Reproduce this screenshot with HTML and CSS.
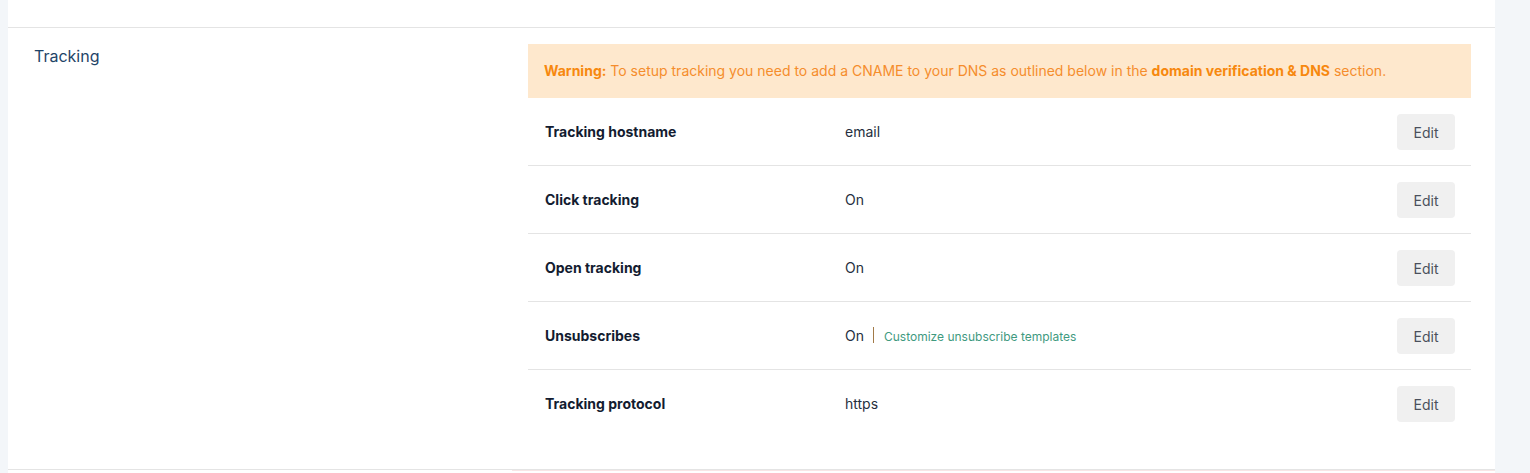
FILE: index.html
```html
<!DOCTYPE html>
<html>
<head>
<meta charset="utf-8">
<link rel="stylesheet" href="styles.css">
</head>
<body>
<div class="page">
  <div class="panel">
    <div class="prev"></div>
    <section class="section">
      <h2 class="section-title">Tracking</h2>
      <div class="section-body">
        <div class="warning"><strong>Warning:</strong> To setup tracking you need to add a CNAME to your DNS as outlined below in the <strong>domain verification &amp; DNS</strong> section.</div>
        <div class="row">
          <div class="label">Tracking hostname</div>
          <div class="value">email</div>
          <button class="edit">Edit</button>
        </div>
        <div class="row">
          <div class="label">Click tracking</div>
          <div class="value">On</div>
          <button class="edit">Edit</button>
        </div>
        <div class="row">
          <div class="label">Open tracking</div>
          <div class="value">On</div>
          <button class="edit">Edit</button>
        </div>
        <div class="row">
          <div class="label">Unsubscribes</div>
          <div class="value">On <span class="sep"></span><a class="link">Customize unsubscribe templates</a></div>
          <button class="edit">Edit</button>
        </div>
        <div class="row last">
          <div class="label">Tracking protocol</div>
          <div class="value">https</div>
          <button class="edit">Edit</button>
        </div>
      </div>
    </section>
    <div class="next"></div>
  </div>
</div>
</body>
</html>
```
FILE: styles.css
```css
html, body {
  margin: 0;
  padding: 0;
  background: #f3f6f9;
  font-family: Inter, "Noto Sans", Arial, sans-serif;
  height: 473px;
  overflow: hidden;
}
.page {
  padding-left: 8px;
  width: 1487px;
}
.panel {
  background: #ffffff;
}
.prev {
  height: 27px;
  border-bottom: 1px solid #e4e4e4;
}
.section {
  display: flex;
  padding: 16px 24px 32px 0;
  border-bottom: 1px solid #e4e4e4;
}
.section-title {
  width: 494px;
  margin: 0;
  padding-left: 26px;
  font-size: 16px;
  line-height: 24px;
  font-weight: 400;
  color: #1f4468;
}
.section-body {
  flex: 1;
}
.warning {
  background: #fee8cd;
  color: #f58d2c;
  font-size: 14px;
  line-height: 22px;
  padding: 16px 16px;
}
.warning strong {
  color: #f7880f;
  font-weight: 700;
}
.row {
  display: flex;
  align-items: center;
  padding: 16px 16px 15px 17px;
  border-bottom: 1px solid #e4e4e4;
}
.row.last {
  border-bottom: none;
}
.label {
  width: 300px;
  margin-bottom: 2px;
  font-size: 14px;
  font-weight: 700;
  color: #131c30;
}
.value {
  flex: 1;
  display: flex;
  align-items: baseline;
  margin-bottom: 2px;
  font-size: 14px;
  color: #262f40;
}
.sep {
  display: inline-block;
  align-self: center;
  width: 1px;
  height: 16px;
  background: #a27a48;
  margin: 0 10px 0 9px;
}
.link {
  font-size: 12px;
  color: #3f9a7f;
}
.edit {
  width: 58px;
  height: 36px;
  border: none;
  border-radius: 4px;
  background: #f0f0f0;
  color: #4a505c;
  font-family: Inter, "Noto Sans", Arial, sans-serif;
  font-size: 14px;
  padding: 0;
}
.next {
  height: 10px;
  margin-left: 504px;
  border-top: 1px solid #f8e6e6;
}
```
